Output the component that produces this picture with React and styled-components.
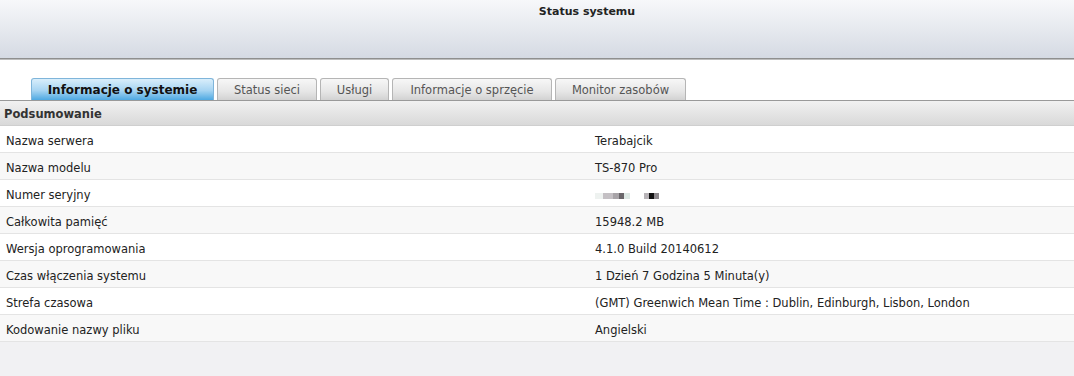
import React from "react";
import styled, { createGlobalStyle } from "styled-components";

const Global = createGlobalStyle`
  html, body { margin: 0; padding: 0; background: #f1f1f3; }
  body { font-family: "DejaVu Sans", Verdana, sans-serif; font-size: 11.5px; color: #222; }
`;

const Page = styled.div`
  width: 1074px;
  height: 376px;
  background: #f1f1f3;
  display: flex;
  flex-direction: column;
`;

const Header = styled.div`
  height: 59px;
  background: linear-gradient(#f7f8fa, #d5dae3);
  border-bottom: 1px solid #8f8f8f;
  box-shadow: 0 1px 0 #bdbdbd;
  display: flex;
  justify-content: center;
  padding-left: 100px;
  box-sizing: border-box;
  flex-shrink: 0;
`;

const Title = styled.div`
  font-weight: bold;
  font-size: 11px;
  color: #222;
  padding-top: 5px;
`;

const TabArea = styled.div`
  background: #fff;
  padding: 18px 0 0 31px;
  margin-top: 1px;
  display: flex;
  gap: 3px;
  border-bottom: 1px solid #999;
  flex-shrink: 0;
`;

const Tab = styled.div`
  height: 22px;
  width: ${(p) => p.$w}px;
  box-sizing: border-box;
  border: 1px solid ${(p) => (p.$active ? "#7fb5da" : "#b5b5b5")};
  border-bottom: none;
  border-radius: 3px 3px 0 0;
  background: ${(p) =>
    p.$active
      ? "linear-gradient(#d9eefb, #a6d4f2 55%, #4ea9e2)"
      : "linear-gradient(#f7f7f7, #e6e6e6 60%, #d2d2d2)"};
  color: ${(p) => (p.$active ? "#111" : "#555")};
  font-weight: ${(p) => (p.$active ? "bold" : "normal")};
  font-size: ${(p) => (p.$active ? "12px" : "11.5px")};
  display: flex;
  align-items: center;
  justify-content: center;
  padding-top: 1px;
`;

const SectionBar = styled.div`
  height: 24px;
  box-sizing: border-box;
  padding: 2px 0 0 4px;
  background: linear-gradient(#f1f1f1, #d9d9d9);
  border-bottom: 1px solid #cfcfcf;
  display: flex;
  align-items: center;
  font-weight: bold;
  color: #333;
  flex-shrink: 0;
  height: 25px;
`;

const Row = styled.div`
  height: 27px;
  box-sizing: border-box;
  padding-top: 3px;
  display: grid;
  grid-template-columns: 595px 1fr;
  align-items: center;
  background: ${(p) => (p.$alt ? "#f8f8f8" : "#ffffff")};
  border-bottom: 1px solid #e4e4e4;
  color: #222;
  flex-shrink: 0;
`;

const Label = styled.div`
  padding-left: 6px;
`;

const Value = styled.div``;

const Blur = styled.span`
  display: inline-flex;
  align-items: center;
  height: 8px;
`;

const Px = styled.span`
  display: inline-block;
  width: ${(p) => p.$w}px;
  height: 6px;
  background: ${(p) => p.$c};
  margin-left: ${(p) => p.$m || 0}px;
`;

const tabs = [
  { t: "Informacje o systemie", w: 183, active: true },
  { t: "Status sieci", w: 100 },
  { t: "Usługi", w: 69 },
  { t: "Informacje o sprzęcie", w: 160 },
  { t: "Monitor zasobów", w: 131 },
];

const rows = [
  ["Nazwa serwera", "Terabajcik"],
  ["Nazwa modelu", "TS-870 Pro"],
  ["Numer seryjny", null],
  ["Całkowita pamięć", "15948.2 MB"],
  ["Wersja oprogramowania", "4.1.0 Build 20140612"],
  ["Czas włączenia systemu", "1 Dzień 7 Godzina 5 Minuta(y)"],
  ["Strefa czasowa", "(GMT) Greenwich Mean Time : Dublin, Edinburgh, Lisbon, London"],
  ["Kodowanie nazwy pliku", "Angielski"],
];

export default function App() {
  return (
    <Page>
      <Global />
      <Header>
        <Title>Status systemu</Title>
      </Header>
      <TabArea>
        {tabs.map((t) => (
          <Tab key={t.t} $w={t.w} $active={t.active}>
            {t.t}
          </Tab>
        ))}
      </TabArea>
      <SectionBar>Podsumowanie</SectionBar>
      {rows.map(([l, v], i) => (
        <Row key={l} $alt={i % 2 === 1}>
          <Label>{l}</Label>
          <Value>
            {v ?? (
              <Blur>
                <Px $w={8} $c="#eef2f0" />
                <Px $w={10} $c="#c4c0c4" />
                <Px $w={6} $c="#a8a4a8" />
                <Px $w={5} $c="#6a666a" />
                <Px $w={6} $c="#dde8e4" />
                <Px $w={5} $c="#b8b4b8" $m={14} />
                <Px $w={5} $c="#111" />
                <Px $w={5} $c="#8c888c" />
              </Blur>
            )}
          </Value>
        </Row>
      ))}
    </Page>
  );
}
